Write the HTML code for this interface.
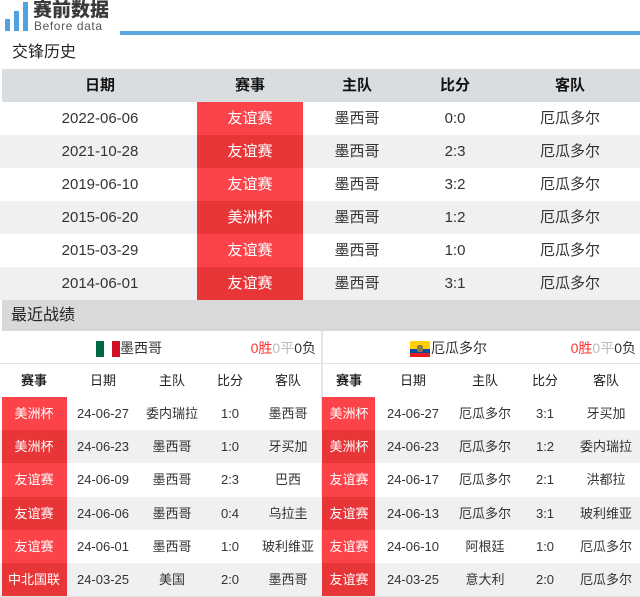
<!DOCTYPE html>
<html><head><meta charset="utf-8"><style>
*{margin:0;padding:0;box-sizing:border-box}
body{width:640px;height:597px;overflow:hidden;background:#fff;font-family:"Liberation Sans","Noto Sans CJK SC",sans-serif;position:relative;color:#333}
.a{position:absolute}
.c{position:absolute;text-align:center;white-space:nowrap;transform:translateX(-50%)}
.row{position:absolute;left:0;height:33px;line-height:33px;font-size:15px}
.red1{background:#fc4349;color:#fff}
.red2{background:#e83538;color:#fff}
.g{background:#f0eff1}
.s{position:absolute;height:33px;line-height:33px;font-size:13px}
.t{position:absolute;font-size:14px;line-height:24px;white-space:nowrap}
</style></head><body>
<div class="a" style="left:5px;top:19px;width:5px;height:12px;background:#4fa3e0"></div>
<div class="a" style="left:14px;top:11px;width:5px;height:20px;background:#4fa3e0"></div>
<div class="a" style="left:23px;top:2px;width:5px;height:29px;background:#4fa3e0"></div>
<div class="a" style="left:33px;top:0px;font-size:19px;font-weight:900;color:#3a3a3a;line-height:21px">赛前数据</div>
<div class="a" style="left:34px;top:20px;font-size:12px;color:#555;line-height:12px;letter-spacing:0.6px">Before data</div>
<div class="a" style="left:120px;top:31px;width:520px;height:4px;background:#5aa7e2"></div>
<div class="a" style="left:12px;top:40px;font-size:16px;line-height:26px;color:#222">交锋历史</div>
<div class="a" style="left:2px;top:69px;width:638px;height:33px;background:#d9dde0"></div>
<div class="row" style="top:69px;width:640px;font-weight:bold;font-size:15px;color:#111">
<span class="c" style="left:100px">日期</span><span class="c" style="left:250px">赛事</span><span class="c" style="left:357px">主队</span><span class="c" style="left:455px">比分</span><span class="c" style="left:570px">客队</span></div>

<div class="row" style="top:102px;width:640px"><div class="a red1" style="left:197px;width:106px;height:33px"></div><span class="c" style="left:100px">2022-06-06</span><span class="c" style="left:250px;color:#fff">友谊赛</span><span class="c" style="left:357px">墨西哥</span><span class="c" style="left:455px">0:0</span><span class="c" style="left:570px">厄瓜多尔</span></div>
<div class="row g" style="top:135px;width:640px"><div class="a red2" style="left:197px;width:106px;height:33px"></div><span class="c" style="left:100px">2021-10-28</span><span class="c" style="left:250px;color:#fff">友谊赛</span><span class="c" style="left:357px">墨西哥</span><span class="c" style="left:455px">2:3</span><span class="c" style="left:570px">厄瓜多尔</span></div>
<div class="row" style="top:168px;width:640px"><div class="a red1" style="left:197px;width:106px;height:33px"></div><span class="c" style="left:100px">2019-06-10</span><span class="c" style="left:250px;color:#fff">友谊赛</span><span class="c" style="left:357px">墨西哥</span><span class="c" style="left:455px">3:2</span><span class="c" style="left:570px">厄瓜多尔</span></div>
<div class="row g" style="top:201px;width:640px"><div class="a red2" style="left:197px;width:106px;height:33px"></div><span class="c" style="left:100px">2015-06-20</span><span class="c" style="left:250px;color:#fff">美洲杯</span><span class="c" style="left:357px">墨西哥</span><span class="c" style="left:455px">1:2</span><span class="c" style="left:570px">厄瓜多尔</span></div>
<div class="row" style="top:234px;width:640px"><div class="a red1" style="left:197px;width:106px;height:33px"></div><span class="c" style="left:100px">2015-03-29</span><span class="c" style="left:250px;color:#fff">友谊赛</span><span class="c" style="left:357px">墨西哥</span><span class="c" style="left:455px">1:0</span><span class="c" style="left:570px">厄瓜多尔</span></div>
<div class="row g" style="top:267px;width:640px"><div class="a red2" style="left:197px;width:106px;height:33px"></div><span class="c" style="left:100px">2014-06-01</span><span class="c" style="left:250px;color:#fff">友谊赛</span><span class="c" style="left:357px">墨西哥</span><span class="c" style="left:455px">3:1</span><span class="c" style="left:570px">厄瓜多尔</span></div>

<div class="a" style="left:2px;top:300px;width:638px;height:31px;background:#d9d9d9"></div>
<div class="a" style="left:11px;top:302px;font-size:16px;line-height:27px;color:#222">最近战绩</div>

<div class="a" style="left:321px;top:331px;width:2px;height:266px;background:#e6e6e6"></div>
<div class="a" style="left:0;top:363px;width:640px;height:1px;background:#e3e3e3"></div>
<div class="a" style="left:0;top:596px;width:640px;height:1px;background:#e3e3e3"></div>

<div class="a" style="left:96px;top:341px;width:8px;height:16px;background:#006847"></div>
<div class="a" style="left:104px;top:341px;width:8px;height:16px;background:#fff"></div>
<div class="a" style="left:112px;top:341px;width:8px;height:16px;background:#ce1126"></div>
<div class="t" style="left:120px;top:336px">墨西哥</div>
<div class="t" style="right:324px;top:336px"><span style="color:#f33">0胜</span><span style="color:#bbb">0平</span><span>0负</span></div>
<div class="a" style="left:410px;top:341px;width:20px;height:8px;background:#ffd100"></div>
<div class="a" style="left:410px;top:349px;width:20px;height:4px;background:#034ea2"></div>
<div class="a" style="left:410px;top:353px;width:20px;height:4px;background:#ed1c24"></div>
<div class="a" style="left:417px;top:345px;width:6px;height:7px;background:#8a7a40;border-radius:2px"></div>
<div class="t" style="left:431px;top:336px">厄瓜多尔</div>
<div class="t" style="right:4px;top:336px"><span style="color:#f33">0胜</span><span style="color:#bbb">0平</span><span>0负</span></div>

<div class="s" style="top:364px;left:0;width:640px;color:#222">
<span class="c" style="left:34px;font-weight:bold">赛事</span><span class="c" style="left:103px">日期</span><span class="c" style="left:172px">主队</span><span class="c" style="left:230px">比分</span><span class="c" style="left:288px">客队</span>
<span class="c" style="left:349px;font-weight:bold">赛事</span><span class="c" style="left:413px">日期</span><span class="c" style="left:485px">主队</span><span class="c" style="left:545px">比分</span><span class="c" style="left:606px">客队</span></div>

<div class="s" style="top:397px;left:0;width:640px"><div class="a red1" style="left:2px;width:65px;height:33px"></div><div class="a red1" style="left:322px;width:53px;height:33px"></div>
<span class="c" style="left:34px;color:#fff">美洲杯</span><span class="c" style="left:103px">24-06-27</span><span class="c" style="left:172px">委内瑞拉</span><span class="c" style="left:230px">1:0</span><span class="c" style="left:288px">墨西哥</span>
<span class="c" style="left:349px;color:#fff">美洲杯</span><span class="c" style="left:413px">24-06-27</span><span class="c" style="left:485px">厄瓜多尔</span><span class="c" style="left:545px">3:1</span><span class="c" style="left:606px">牙买加</span></div>
<div class="s g" style="top:430px;left:0;width:640px"><div class="a red2" style="left:2px;width:65px;height:33px"></div><div class="a red2" style="left:322px;width:53px;height:33px"></div>
<span class="c" style="left:34px;color:#fff">美洲杯</span><span class="c" style="left:103px">24-06-23</span><span class="c" style="left:172px">墨西哥</span><span class="c" style="left:230px">1:0</span><span class="c" style="left:288px">牙买加</span>
<span class="c" style="left:349px;color:#fff">美洲杯</span><span class="c" style="left:413px">24-06-23</span><span class="c" style="left:485px">厄瓜多尔</span><span class="c" style="left:545px">1:2</span><span class="c" style="left:606px">委内瑞拉</span></div>
<div class="s" style="top:463px;left:0;width:640px"><div class="a red1" style="left:2px;width:65px;height:34px"></div><div class="a red1" style="left:322px;width:53px;height:34px"></div>
<span class="c" style="left:34px;color:#fff">友谊赛</span><span class="c" style="left:103px">24-06-09</span><span class="c" style="left:172px">墨西哥</span><span class="c" style="left:230px">2:3</span><span class="c" style="left:288px">巴西</span>
<span class="c" style="left:349px;color:#fff">友谊赛</span><span class="c" style="left:413px">24-06-17</span><span class="c" style="left:485px">厄瓜多尔</span><span class="c" style="left:545px">2:1</span><span class="c" style="left:606px">洪都拉</span></div>
<div class="s g" style="top:497px;left:0;width:640px"><div class="a red2" style="left:2px;width:65px;height:33px"></div><div class="a red2" style="left:322px;width:53px;height:33px"></div>
<span class="c" style="left:34px;color:#fff">友谊赛</span><span class="c" style="left:103px">24-06-06</span><span class="c" style="left:172px">墨西哥</span><span class="c" style="left:230px">0:4</span><span class="c" style="left:288px">乌拉圭</span>
<span class="c" style="left:349px;color:#fff">友谊赛</span><span class="c" style="left:413px">24-06-13</span><span class="c" style="left:485px">厄瓜多尔</span><span class="c" style="left:545px">3:1</span><span class="c" style="left:606px">玻利维亚</span></div>
<div class="s" style="top:530px;left:0;width:640px"><div class="a red1" style="left:2px;width:65px;height:33px"></div><div class="a red1" style="left:322px;width:53px;height:33px"></div>
<span class="c" style="left:34px;color:#fff">友谊赛</span><span class="c" style="left:103px">24-06-01</span><span class="c" style="left:172px">墨西哥</span><span class="c" style="left:230px">1:0</span><span class="c" style="left:288px">玻利维亚</span>
<span class="c" style="left:349px;color:#fff">友谊赛</span><span class="c" style="left:413px">24-06-10</span><span class="c" style="left:485px">阿根廷</span><span class="c" style="left:545px">1:0</span><span class="c" style="left:606px">厄瓜多尔</span></div>
<div class="s g" style="top:563px;left:0;width:640px"><div class="a red2" style="left:2px;width:65px;height:33px"></div><div class="a red2" style="left:322px;width:53px;height:33px"></div>
<span class="c" style="left:34px;color:#fff">中北国联</span><span class="c" style="left:103px">24-03-25</span><span class="c" style="left:172px">美国</span><span class="c" style="left:230px">2:0</span><span class="c" style="left:288px">墨西哥</span>
<span class="c" style="left:349px;color:#fff">友谊赛</span><span class="c" style="left:413px">24-03-25</span><span class="c" style="left:485px">意大利</span><span class="c" style="left:545px">2:0</span><span class="c" style="left:606px">厄瓜多尔</span></div>
</body></html>
